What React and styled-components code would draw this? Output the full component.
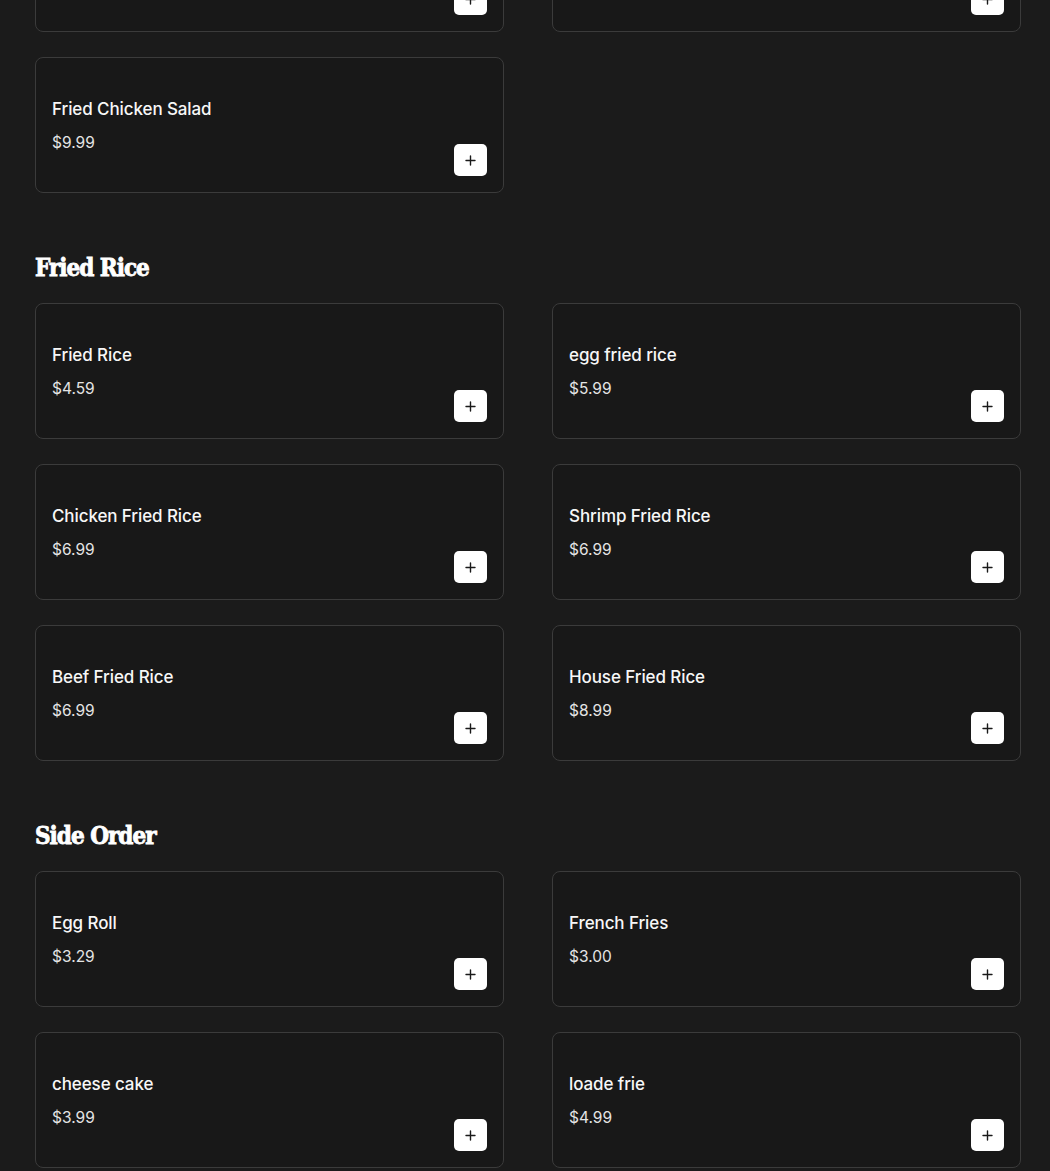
import React from "react";
import styled, { createGlobalStyle } from "styled-components";

const GlobalStyle = createGlobalStyle`
  html, body {
    margin: 0;
    padding: 0;
    background: #1b1b1b;
  }
  body {
    font-family: "Inter", "Liberation Sans", sans-serif;
    color: #fff;
    overflow: hidden;
  }
  * { box-sizing: border-box; }
`;

const Page = styled.main`
  margin-top: -104px;
  padding: 0 30px 40px 35px;
`;

const Section = styled.section`
  padding-top: ${(p) => (p.$first ? "0" : "60px")};
`;

const Heading = styled.h2`
  margin: 0 0 20px;
  height: 30px;
  font-family: "DejaVu Serif Condensed", "DejaVu Serif", serif;
  font-weight: 700;
  font-size: 24px;
  line-height: 30px;
  color: #ffffff;
  letter-spacing: -1px;
  -webkit-text-stroke: 0.8px #ffffff;
`;

const Grid = styled.div`
  display: grid;
  grid-template-columns: 469px 469px;
  column-gap: 48px;
  row-gap: 25px;
`;

const Card = styled.div`
  height: 136px;
  background: #181818;
  border: 1px solid #3b3b3b;
  border-radius: 8px;
  padding: 16px;
  display: flex;
  justify-content: space-between;
  align-items: flex-end;
`;

const Info = styled.div`
  margin-bottom: 21px;
  display: flex;
  flex-direction: column;
`;

const Title = styled.div`
  font-size: 17px;
  font-weight: 500;
  line-height: 24px;
  color: #f7f7f7;
  margin-bottom: 10px;
  letter-spacing: -0.1px;
`;

const Price = styled.div`
  font-size: 15.5px;
  font-weight: 400;
  line-height: 24px;
  color: #e4e4e4;
`;

const AddButton = styled.button`
  width: 33px;
  height: 32px;
  padding: 0;
  border: none;
  border-radius: 5px;
  background: #ffffff;
  display: flex;
  align-items: center;
  justify-content: center;
  cursor: pointer;
`;

const PlusIcon = () => (
  <svg width="11" height="11" viewBox="0 0 11 11" fill="none">
    <path d="M5.5 1v9M1 5.5h9" stroke="#1a1a1a" strokeWidth="1.4" strokeLinecap="round" />
  </svg>
);

const menu = [
  {
    name: "",
    items: [
      { name: "", price: "" },
      { name: "", price: "" },
      { name: "Fried Chicken Salad", price: "$9.99" },
    ],
  },
  {
    name: "Fried Rice",
    items: [
      { name: "Fried Rice", price: "$4.59" },
      { name: "egg fried rice", price: "$5.99" },
      { name: "Chicken Fried Rice", price: "$6.99" },
      { name: "Shrimp Fried Rice", price: "$6.99" },
      { name: "Beef Fried Rice", price: "$6.99" },
      { name: "House Fried Rice", price: "$8.99" },
    ],
  },
  {
    name: "Side Order",
    items: [
      { name: "Egg Roll", price: "$3.29" },
      { name: "French Fries", price: "$3.00" },
      { name: "cheese cake", price: "$3.99" },
      { name: "loade frie", price: "$4.99" },
    ],
  },
];

export default function App() {
  return (
    <>
      <GlobalStyle />
      <Page>
        {menu.map((section, i) => (
          <Section key={i} $first={i === 0}>
            {section.name && <Heading>{section.name}</Heading>}
            <Grid>
              {section.items.map((item, j) => (
                <Card key={j}>
                  <Info>
                    <Title>{item.name}</Title>
                    <Price>{item.price}</Price>
                  </Info>
                  <AddButton aria-label={`Add ${item.name || "item"}`}>
                    <PlusIcon />
                  </AddButton>
                </Card>
              ))}
            </Grid>
          </Section>
        ))}
      </Page>
    </>
  );
}
